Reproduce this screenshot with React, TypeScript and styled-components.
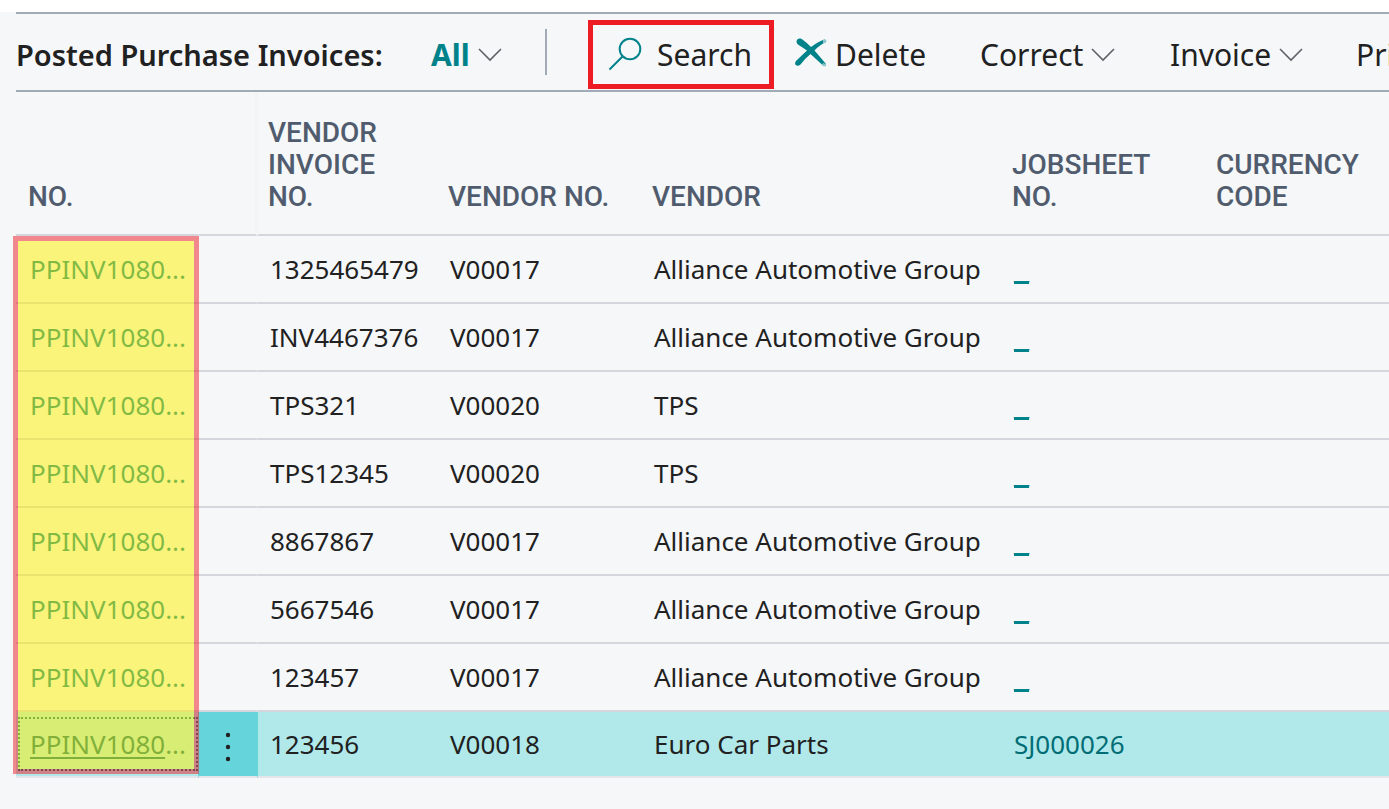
import React from "react";
import styled, { createGlobalStyle, css } from "styled-components";

const Global = createGlobalStyle`
  * { box-sizing: border-box; }
  html, body { min-height: 100%; }
  body {
    margin: 0;
    background: #f5f7f9;
    color: #212121;
    font-family: "Noto Sans", "Open Sans", sans-serif;
    overflow-x: hidden;
  }
`;

const TopBar = styled.div`
  height: 12px;
  background: #ffffff;
`;

const Page = styled.main`
  padding-left: 16px;
  overflow: hidden;
`;

const Toolbar = styled.header`
  display: flex;
  align-items: center;
  height: 80px;
  padding-top: 5px;
  border-top: 2px solid #a1abb5;
  border-bottom: 2px solid #a1abb5;
  font-size: 30px;
  line-height: 40px;
  white-space: nowrap;
`;

const Title = styled.h1`
  flex: none;
  width: 415px;
  margin: 0;
  font-size: 29px;
  font-weight: 600;
`;

const Tool = styled.button<{ $accent?: boolean }>`
  display: flex;
  flex: none;
  align-items: center;
  gap: 8px;
  margin: 0;
  padding: 0;
  border: 0;
  background: none;
  color: ${(p) => (p.$accent ? "#00828a" : "#212121")};
  font: inherit;
  font-weight: ${(p) => (p.$accent ? 700 : 400)};
`;

const SearchTool = styled(Tool)`
  width: 186px;
  height: 69px;
  gap: 15px;
  padding-left: 15px;
  border: 5px solid #ed1c24;
`;

const FilterSlot = styled.div`
  flex: none;
  width: 114px;
`;

const Divider = styled.div`
  flex: none;
  width: 2px;
  height: 46px;
  margin: 0 41px 5px 0;
  background: #a1abb5;
`;

const Slot = styled.div<{ $width: number; $pad?: number }>`
  flex: none;
  width: ${(p) => p.$width}px;
  padding-left: ${(p) => p.$pad ?? 0}px;
`;

const TableWrap = styled.div`
  position: relative;
  width: 100%;
`;

const Table = styled.table`
  width: 100%;
  min-width: 1373px;
  table-layout: fixed;
  border-collapse: separate;
  border-spacing: 0;
  font-size: 26px;
  line-height: 32px;
`;

const notch = css`
  border-right: 1px solid #f5f7f9;
`;

const Th = styled.th<{ $first?: boolean; $line?: boolean }>`
  height: 144px;
  padding: 0 20px 21px ${(p) => (p.$first ? 12 : 10)}px;
  border-bottom: 2px solid #d3d6dd;
  color: #505c6d;
  font-family: Roboto, sans-serif;
  font-size: 28px;
  font-weight: 500;
  text-align: left;
  vertical-align: bottom;
  ${(p) => p.$first && notch}
  ${(p) => p.$line && css`border-right: 3px solid #f2f4f6;`}
`;

const Td = styled.td<{ $notch?: boolean }>`
  height: 68px;
  padding: 0 0 0 12px;
  border-bottom: 2px solid #d3d6dd;
  white-space: nowrap;
  ${(p) => p.$notch && notch}
`;

const Row = styled.tr<{ $selected?: boolean }>`
  ${(p) =>
    p.$selected &&
    css`
      background: #b1e9eb;
      ${Td} {
        height: 66px;
        border-bottom-color: #e5e5e9;
        border-right-color: #65d4db;
      }
    `}
`;

const NumberCell = styled(Td)<{ $selected?: boolean }>`
  position: relative;
  padding-left: 14px;
  color: ${(p) => (p.$selected ? "#006d75" : "#00828a")};
`;

const FocusRing = styled.span`
  position: absolute;
  inset: 5px 0 5px 2px;
  border: 2px dotted #00757c;
  pointer-events: none;
`;

const MenuCell = styled(Td)<{ $selected?: boolean }>`
  padding: 0;
  ${(p) => p.$selected && css`background: #65d4db;`}
`;

const Link = styled.a<{ $underline?: boolean; $dark?: boolean }>`
  color: ${(p) => (p.$dark ? "#006d75" : "#00828a")};
  text-decoration: ${(p) => (p.$underline ? "underline" : "none")};
  text-decoration-thickness: 2px;
  text-underline-offset: 3px;
`;

const BlankLink = styled(Link)`
  font-family: "Liberation Sans", sans-serif;
  font-size: 27px;
  font-weight: 700;
  text-decoration-skip-ink: none;
`;

const MenuButton = styled.button`
  display: flex;
  align-items: center;
  justify-content: center;
  width: 100%;
  height: 64px;
  padding: 6px 0 0;
  border: 0;
  background: none;
`;

const Highlight = styled.div`
  position: absolute;
  top: 144px;
  bottom: 4px;
  left: -3px;
  width: 186px;
  border: 5px solid #ed1c24;
  background: #fff200;
  opacity: 0.5;
  pointer-events: none;
`;

const Chevron = () => (
  <svg width="24" height="14" viewBox="0 0 24 14" fill="none" stroke="#5f6368" strokeWidth="1.6" aria-hidden="true">
    <path d="M1 1 L12 12 L23 1" />
  </svg>
);

const SearchIcon = () => (
  <svg width="34" height="36" viewBox="0 0 34 36" fill="none" stroke="#00828a" strokeWidth="2" aria-hidden="true">
    <circle cx="22" cy="12" r="10.3" />
    <path d="M14.5 19.5 L1.5 32.5" />
  </svg>
);

const DeleteIcon = () => (
  <svg width="32" height="34" viewBox="0 0 32 34" fill="#00828a" aria-hidden="true">
    <path d="M1.5 3.5 Q2 0 5.5 0.5 Q8 1 16 9 Q23 3.5 29.5 1.5 Q31.5 2 31 4 Q25 6.500 19.5 12.5 Q26 20 31 26 Q31 28.5 28.5 28 Q21 21 15.5 16 Q9.5 21 5.5 26.5 Q2.5 29 0.3 26.5 Q-0.5 24 2 22 L12 12.5 L3 6.5 Q1.5 5.5 1.5 3.5 Z" />
    <path d="M28 1.8 Q31.5 1 31.5 3 Q31 4.5 28 5.5 Z M28 25 L31 26 Q32 28.5 29 28.5 L27 27 Z" fill="#8cc8cc" />
  </svg>
);

const DotsIcon = () => (
  <svg width="6" height="30" viewBox="0 0 6 30" fill="#212121" aria-hidden="true">
    <circle cx="3" cy="3" r="2.2" />
    <circle cx="3" cy="15" r="2.2" />
    <circle cx="3" cy="27" r="2.2" />
  </svg>
);

const group = "Alliance Automotive Group";
const rows = [
  { invoice: "1325465479", code: "V00017", vendor: group },
  { invoice: "INV4467376", code: "V00017", vendor: group },
  { invoice: "TPS321", code: "V00020", vendor: "TPS" },
  { invoice: "TPS12345", code: "V00020", vendor: "TPS" },
  { invoice: "8867867", code: "V00017", vendor: group },
  { invoice: "5667546", code: "V00017", vendor: group },
  { invoice: "123457", code: "V00017", vendor: group },
  { invoice: "123456", code: "V00018", vendor: "Euro Car Parts", job: "SJ000026" },
];

export default function App() {
  return (
    <>
      <Global />
      <TopBar />
      <Page>
        <Toolbar>
          <Title>Posted Purchase Invoices:</Title>
          <FilterSlot>
            <Tool $accent>All <Chevron /></Tool>
          </FilterSlot>
          <Divider />
          <SearchTool><SearchIcon />Search</SearchTool>
          <Slot $width={206} $pad={21}>
            <Tool><DeleteIcon />Delete</Tool>
          </Slot>
          <Slot $width={190}>
            <Tool>Correct <Chevron /></Tool>
          </Slot>
          <Slot $width={186}>
            <Tool>Invoice <Chevron /></Tool>
          </Slot>
          <Tool>Print</Tool>
        </Toolbar>
        <TableWrap>
          <Table>
            <colgroup>
              <col style={{ width: 183 }} />
              <col style={{ width: 59 }} />
              <col style={{ width: 180 }} />
              <col style={{ width: 204 }} />
              <col style={{ width: 360 }} />
              <col style={{ width: 204 }} />
              <col />
            </colgroup>
            <thead>
              <tr>
                <Th $first>NO.</Th>
                <Th $line aria-label="Row actions" />
                <Th>VENDOR INVOICE NO.</Th>
                <Th>VENDOR NO.</Th>
                <Th>VENDOR</Th>
                <Th>JOBSHEET NO.</Th>
                <Th>CURRENCY CODE</Th>
              </tr>
            </thead>
            <tbody>
              {rows.map((r) => {
                const selected = Boolean(r.job);
                return (
                  <Row key={r.invoice} $selected={selected}>
                    <NumberCell $notch $selected={selected}>
                      <Link href="#" $underline={selected} $dark={selected}>PPINV1080</Link>...
                      {selected && <FocusRing />}
                    </NumberCell>
                    <MenuCell $notch $selected={selected}>
                      {selected && <MenuButton aria-label="Show more options"><DotsIcon /></MenuButton>}
                    </MenuCell>
                    <Td>{r.invoice}</Td>
                    <Td>{r.code}</Td>
                    <Td>{r.vendor}</Td>
                    <Td>
                      {r.job ? <Link href="#" $dark>{r.job}</Link> : <BlankLink href="#" $underline>_</BlankLink>}
                    </Td>
                    <Td />
                  </Row>
                );
              })}
            </tbody>
          </Table>
          <Highlight />
        </TableWrap>
      </Page>
    </>
  );
}
